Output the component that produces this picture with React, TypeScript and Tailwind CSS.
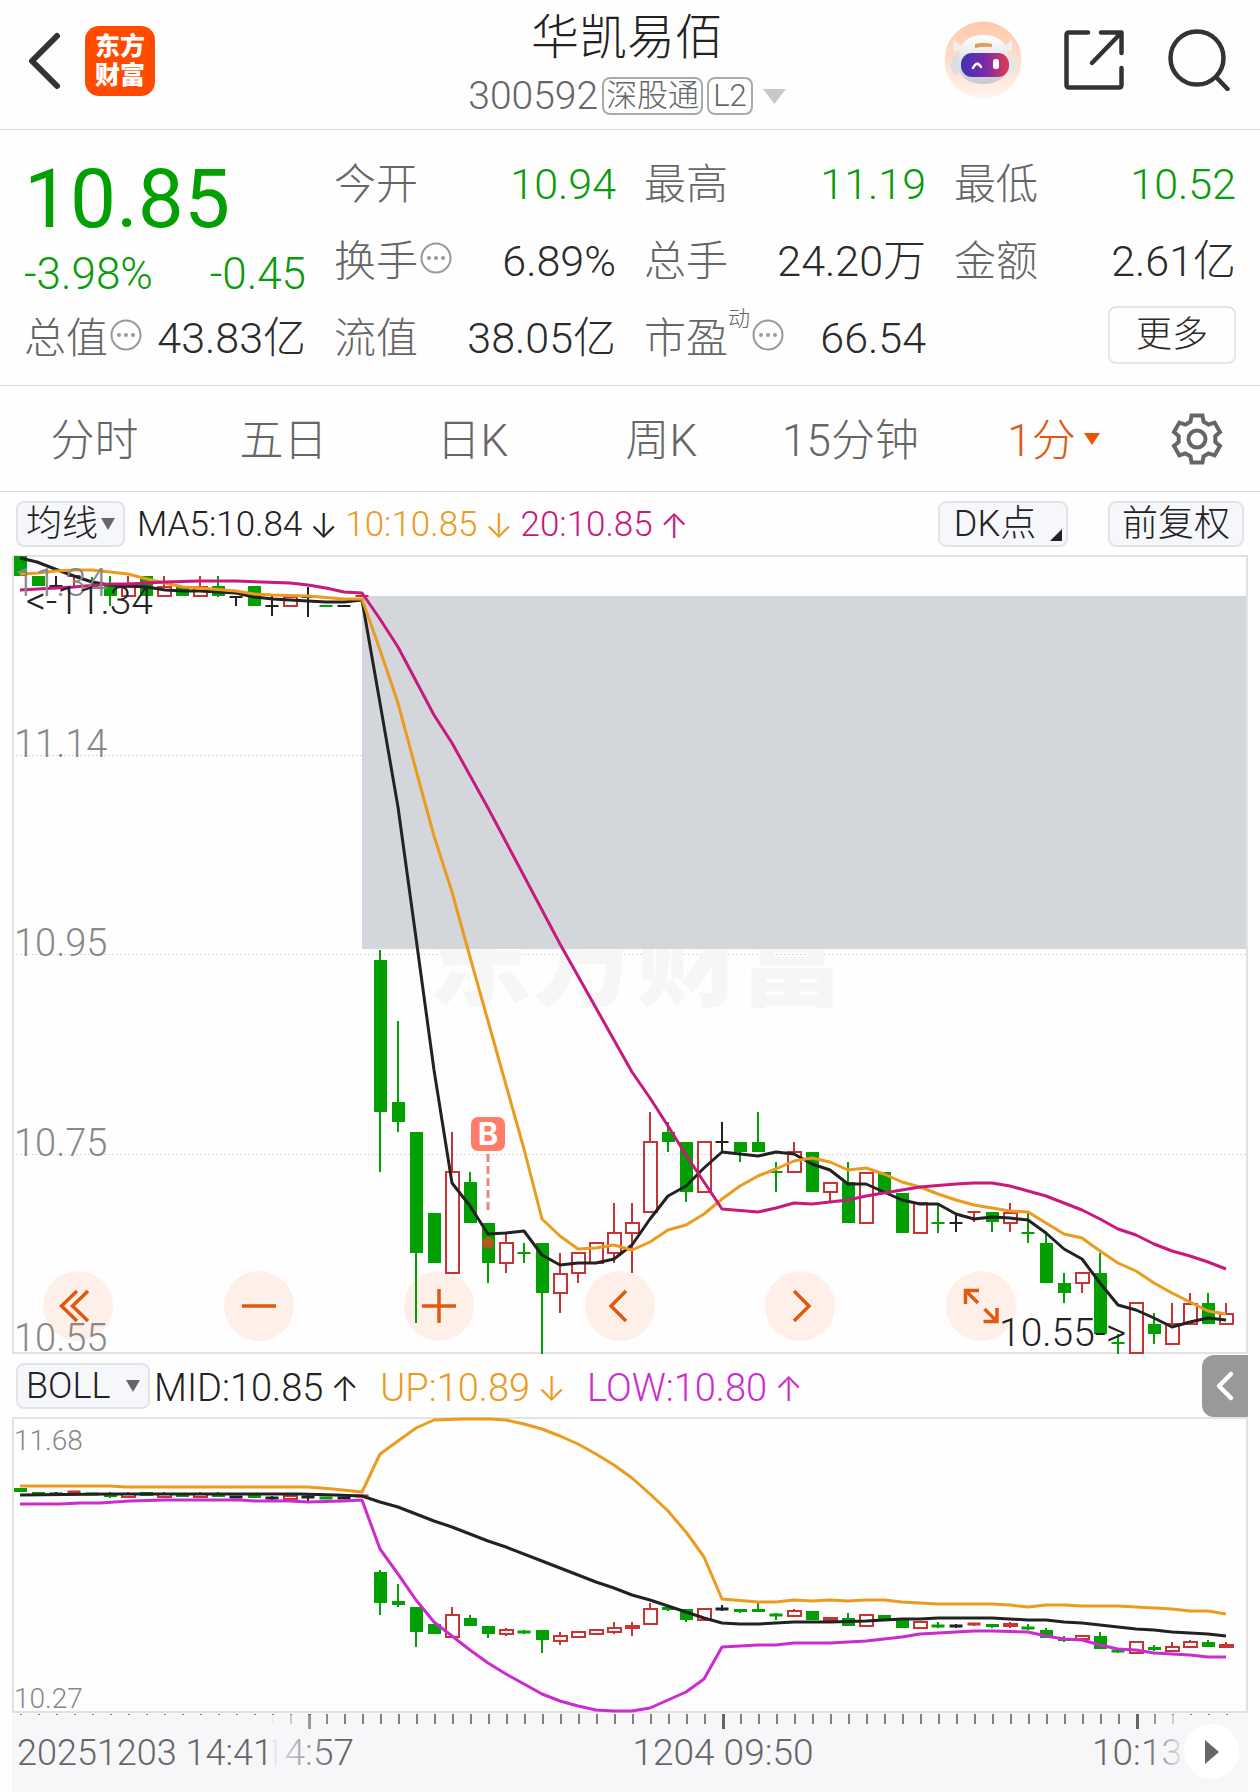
import React, { useState } from "react";

type Kind = "g" | "r" | "k";
// kind, body top, body bottom, wick top, wick bottom
type Candle = [Kind, number, number, number, number];

const STEP = 18;
const X0 = 20;

const CANDLES: Candle[] = [
  ["g", 556, 576, 556, 576],
  ["g", 576, 586, 576, 586],
  ["k", 586, 586, 576, 586],
  ["r", 576, 576, 576, 586],
  ["g", 586, 586, 577, 588],
  ["g", 586, 596, 576, 606],
  ["r", 586, 597, 576, 597],
  ["g", 576, 596, 576, 596],
  ["r", 586, 597, 576, 597],
  ["g", 586, 596, 586, 596],
  ["r", 586, 597, 576, 597],
  ["g", 586, 596, 576, 597],
  ["k", 597, 597, 597, 606],
  ["g", 586, 606, 586, 606],
  ["k", 606, 606, 596, 616],
  ["r", 596, 607, 596, 607],
  ["k", 597, 597, 587, 617],
  ["g", 606, 606, 606, 606],
  ["k", 606, 606, 606, 606],
  ["r", 596, 596, 596, 596],
  ["g", 960, 1112, 950, 1172],
  ["g", 1102, 1122, 1021, 1132],
  ["g", 1132, 1253, 1132, 1323],
  ["g", 1213, 1263, 1213, 1263],
  ["r", 1171, 1274, 1132, 1274],
  ["g", 1182, 1223, 1172, 1223],
  ["g", 1223, 1263, 1223, 1283],
  ["r", 1242, 1264, 1233, 1273],
  ["g", 1253, 1253, 1243, 1263],
  ["g", 1243, 1293, 1243, 1354],
  ["r", 1273, 1294, 1253, 1313],
  ["r", 1252, 1274, 1252, 1283],
  ["r", 1242, 1264, 1242, 1264],
  ["r", 1232, 1254, 1203, 1263],
  ["r", 1222, 1234, 1203, 1273],
  ["r", 1141, 1213, 1112, 1213],
  ["g", 1132, 1142, 1122, 1152],
  ["g", 1142, 1192, 1142, 1202],
  ["r", 1141, 1193, 1141, 1193],
  ["k", 1142, 1142, 1122, 1152],
  ["g", 1142, 1152, 1142, 1162],
  ["g", 1142, 1152, 1112, 1152],
  ["g", 1172, 1172, 1162, 1192],
  ["r", 1151, 1173, 1142, 1173],
  ["g", 1152, 1192, 1152, 1192],
  ["r", 1182, 1193, 1182, 1202],
  ["g", 1182, 1223, 1162, 1223],
  ["r", 1172, 1224, 1172, 1224],
  ["g", 1172, 1193, 1172, 1193],
  ["g", 1193, 1233, 1193, 1233],
  ["r", 1202, 1234, 1202, 1234],
  ["g", 1223, 1223, 1203, 1233],
  ["k", 1223, 1223, 1214, 1232],
  ["r", 1212, 1212, 1212, 1222],
  ["g", 1212, 1222, 1212, 1232],
  ["r", 1212, 1224, 1203, 1232],
  ["g", 1233, 1233, 1213, 1243],
  ["g", 1243, 1283, 1233, 1283],
  ["g", 1283, 1293, 1273, 1303],
  ["r", 1272, 1284, 1272, 1293],
  ["g", 1273, 1334, 1253, 1334],
  ["g", 1343, 1343, 1334, 1354],
  ["r", 1302, 1354, 1302, 1354],
  ["g", 1324, 1334, 1313, 1344],
  ["r", 1323, 1345, 1303, 1345],
  ["r", 1303, 1325, 1293, 1325],
  ["g", 1303, 1324, 1293, 1324],
  ["r", 1313, 1325, 1303, 1325],
];

const MA5 =
  "20,558 37,562 55,569 74,576 92,582 110,585 129,586 147,587 165,590 183,591 200,591 236,593 254,597 273,599 290,600 308,601 326,602 344,602 362,600 380,703 398,807 416,938 434,1070 452,1183 470,1206 488,1234 506,1233 524,1231 542,1255 560,1265 578,1263 596,1263 614,1259 632,1245 650,1219 668,1196 686,1186 704,1168 722,1152 740,1154 758,1156 776,1152 794,1154 812,1164 830,1170 848,1184 866,1184 884,1192 902,1200 920,1204 938,1204 956,1214 974,1219 992,1217 1010,1218 1028,1220 1046,1233 1064,1249 1082,1259 1100,1283 1118,1305 1136,1310 1154,1318 1172,1327 1190,1322 1208,1318 1226,1320";
const MA10 =
  "20,574 38,573 56,571 74,570 92,570 110,572 128,574 147,579 165,583 183,587 200,588 236,591 254,594 272,595 308,596 344,599 362,599 380,650 398,703 416,770 434,836 452,892 470,957 488,1021 506,1085 524,1149 542,1219 560,1236 578,1249 596,1248 614,1245 632,1250 650,1242 668,1230 686,1225 704,1214 722,1199 740,1186 758,1176 776,1169 794,1161 812,1158 830,1162 848,1170 866,1168 884,1174 902,1182 920,1187 938,1194 956,1200 974,1205 992,1208 1010,1211 1028,1212 1046,1223 1064,1234 1082,1238 1100,1251 1118,1263 1136,1271 1154,1283 1172,1293 1190,1302 1208,1311 1226,1314";
const MA20 =
  "20,590 74,587 110,584 128,584 165,582 200,581 236,581 290,583 308,585 326,588 344,592 362,593 380,619 398,647 416,681 434,715 452,743 488,808 524,876 560,944 632,1072 650,1098 668,1126 686,1155 722,1209 758,1212 776,1208 794,1203 812,1204 830,1202 848,1200 866,1196 884,1193 902,1190 920,1187 956,1184 974,1183 992,1183 1010,1186 1028,1191 1046,1196 1064,1203 1082,1210 1100,1219 1118,1229 1136,1235 1154,1244 1172,1251 1190,1256 1208,1262 1226,1269";
const BOLL_UP =
  "20,1486 110,1486 125,1487 308,1487 333,1489 362,1492 380,1454 398,1441 416,1428 434,1420 463,1419 490,1419 506,1420 524,1424 542,1429 560,1436 578,1444 596,1454 614,1465 632,1478 650,1494 668,1511 686,1532 704,1557 722,1599 758,1602 776,1602 794,1600 812,1601 830,1600 848,1601 866,1600 884,1600 902,1602 938,1604 992,1604 1010,1605 1028,1607 1046,1605 1064,1605 1082,1606 1118,1606 1172,1609 1190,1611 1208,1611 1226,1614";
const BOLL_MID =
  "20,1495 110,1494 300,1494 335,1495 362,1496 380,1502 398,1507 434,1521 452,1527 488,1541 506,1547 542,1561 596,1582 614,1588 632,1595 650,1600 668,1606 686,1612 704,1618 722,1623 740,1624 758,1624 794,1622 830,1622 866,1621 902,1619 920,1619 938,1618 992,1618 1028,1620 1046,1620 1064,1622 1082,1623 1136,1629 1154,1630 1172,1632 1208,1634 1226,1636";
const BOLL_LOW =
  "20,1504 60,1504 80,1503 100,1503 130,1501 165,1500 240,1500 254,1501 290,1501 308,1502 344,1501 362,1500 380,1549 398,1574 416,1600 434,1622 452,1636 470,1650 488,1663 506,1674 524,1684 542,1694 560,1701 578,1706 596,1710 614,1711 632,1711 650,1708 668,1700 686,1692 704,1679 722,1647 758,1645 776,1645 794,1643 830,1643 866,1641 902,1637 920,1634 974,1631 992,1631 1028,1632 1046,1636 1064,1639 1082,1640 1100,1645 1118,1649 1136,1650 1154,1653 1190,1655 1208,1657 1226,1657";

const COLORS: Record<Kind, string> = { g: "#02a002", r: "#c83434", k: "#222222" };

function Candles({ map, thin = 2 }: { map: (y: number) => number; thin?: number }) {
  return (
    <g>
      {CANDLES.map(([kind, top, bottom, high, low], i) => {
        const x = X0 + i * STEP;
        const c = COLORS[kind];
        const t = map(top);
        const b = map(bottom);
        if (bottom - top < 2) {
          return (
            <g key={i} stroke={c}>
              <path d={`M${x - 6.5} ${t}H${x + 6.5}`} strokeWidth={thin} />
              <path d={`M${x} ${map(high)}V${map(low)}`} strokeWidth={2} />
            </g>
          );
        }
        if (kind === "r") {
          return (
            <g key={i} stroke={c} strokeWidth={2} fill="none">
              <path d={`M${x} ${map(high)}V${t}M${x} ${b}V${map(low)}`} />
              <rect x={x - 6} y={t + (thin > 2 ? 0 : 1)} width={13} height={Math.max(b - t - (thin > 2 ? 0 : 2), 2)} />
            </g>
          );
        }
        return (
          <g key={i}>
            <path d={`M${x} ${map(high)}V${map(low)}`} stroke={c} strokeWidth={2} />
            <rect x={x - 6} y={t} width={13} height={Math.max(b - t, thin)} fill={c} />
          </g>
        );
      })}
    </g>
  );
}

function Line({ points, color }: { points: string; color: string }) {
  return <polyline points={points} fill="none" stroke={color} strokeWidth={3} strokeLinejoin="round" />;
}

function Dots() {
  return (
    <svg viewBox="0 0 32 32" className="mb-2 ml-0.5 size-8 shrink-0" aria-hidden="true">
      <circle cx="16" cy="16" r="14.5" fill="none" stroke="#999" strokeWidth="2" />
      <circle cx="9" cy="16" r="2" fill="#999" />
      <circle cx="16" cy="16" r="2" fill="#999" />
      <circle cx="23" cy="16" r="2" fill="#999" />
    </svg>
  );
}

function Down({ className }: { className: string }) {
  return (
    <svg viewBox="0 0 10 8" preserveAspectRatio="none" className={className} aria-hidden="true">
      <path d="M0 0H10L5 8Z" fill="currentColor" />
    </svg>
  );
}

function Stat({
  label,
  value,
  green,
  dots,
  sup,
}: {
  label: string;
  value: string;
  green?: boolean;
  dots?: boolean;
  sup?: string;
}) {
  return (
    <div className="flex h-[77px] items-center justify-between whitespace-nowrap">
      <dt className="flex items-center text-[#666]">
        {label}
        {sup && <sup className="-top-5 text-[22px] leading-none">{sup}</sup>}
        {dots && <Dots />}
      </dt>
      <dd className={`text-[43px] ${green ? "text-[#0a9b0a]" : "text-[#2b2b2b]"}`}>{value}</dd>
    </div>
  );
}

const gearPath = (() => {
  const pts: string[] = [];
  for (let k = 0; k < 6; k++) {
    const base = 30 + k * 60;
    for (const [r, d] of [
      [18.5, -21],
      [24, -13],
      [24, 13],
      [18.5, 21],
    ]) {
      const a = ((base + d) * Math.PI) / 180;
      pts.push(`${(28 + r * Math.cos(a)).toFixed(1)} ${(28 + r * Math.sin(a)).toFixed(1)}`);
    }
  }
  return `M${pts.join("L")}Z`;
})();

function Header() {
  return (
    <header className="flex h-[130px] items-start justify-between border-b border-[#d6d6d6] pr-[30px] pl-6">
      <div className="flex w-[330px] items-center pt-[26px]">
        <button aria-label="返回" className="mr-[21px]">
          <svg viewBox="0 0 40 60" className="h-[60px] w-10" fill="none" stroke="#333" strokeWidth="6" strokeLinecap="round" strokeLinejoin="round">
            <path d="M33 5L8 30L33 55" />
          </svg>
        </button>
        <div className="flex size-[70px] flex-col items-center justify-center rounded-[14px] bg-[#ff4a00] text-[25px] leading-[29px] font-black text-white">
          <span>东方</span>
          <span>财富</span>
        </div>
      </div>
      <div className="flex flex-col items-center">
        <h1 className="mt-2 text-[48px] leading-[60px] text-[#222]">华凯易佰</h1>
        <button className="mt-2 flex items-center text-[39px] leading-[40px] text-[#666]">
          <span className="mr-1">300592</span>
          <span className="mr-1 flex h-[38px] items-center rounded-lg border-2 border-[#aaa] px-0.5 text-[31px]">深股通</span>
          <span className="mr-2.5 flex h-[38px] items-center rounded-lg border-2 border-[#aaa] px-1 text-[31px]">L2</span>
          <Down className="h-[15px] w-[23px] text-[#c8c8c8]" />
        </button>
      </div>
      <div className="flex w-[330px] items-center justify-end pt-[21px]">
        <button aria-label="助手" className="mr-[41px]">
          <svg viewBox="0 0 78 78" className="size-[78px]">
            <defs>
              <linearGradient id="halo" x1="0" y1="0" x2="0" y2="1">
                <stop offset="0" stopColor="#fdc8ab" />
                <stop offset="1" stopColor="#fff4ee" />
              </linearGradient>
              <linearGradient id="visor" x1="0" y1="0" x2="1" y2="0">
                <stop offset="0" stopColor="#3a35b8" />
                <stop offset="0.5" stopColor="#7a2aa8" />
                <stop offset="1" stopColor="#dd3c55" />
              </linearGradient>
              <linearGradient id="shell" x1="0" y1="0" x2="0" y2="1">
                <stop offset="0" stopColor="#ffffff" />
                <stop offset="1" stopColor="#c9c9d2" />
              </linearGradient>
            </defs>
            <circle cx="39" cy="39" r="38.5" fill="url(#halo)" />
            <path d="M11 18Q7 24 11 31L18 28L17 24Q12 23 11 18ZM67 18Q70 24 67 31L60 28L61 24Q66 23 67 18Z" fill="#f1efef" />
            <ellipse cx="12" cy="44" rx="5" ry="10" fill="#dcdce2" />
            <ellipse cx="67" cy="44" rx="5" ry="10" fill="#e6e6ea" />
            <path d="M15 38Q15 14 39 14Q64 14 64 38Q67 62 39 63Q11 62 15 38Z" fill="url(#shell)" />
            <path d="M31 23Q40 21 48 23V26Q40 25 31 27Z" fill="#e39a5b" />
            <rect x="17" y="32" width="48" height="24" rx="11" fill="url(#visor)" />
            <path d="M29 47Q33 39 37 46" fill="none" stroke="#fff" strokeWidth="2.5" strokeLinecap="round" />
            <rect x="49" y="38" width="6" height="10" rx="2.5" fill="#fff" />
          </svg>
        </button>
        <button aria-label="分享" className="mr-[43px]">
          <svg viewBox="0 0 62 62" className="size-[62px]" fill="none" stroke="#333" strokeWidth="4.5" strokeLinecap="round" strokeLinejoin="round">
            <path d="M25 3.500H6Q3.500 3.500 3.500 6V56Q3.500 58.500 6 58.500H56Q58.500 58.500 58.500 56V39M38 3.500H58.500V24M58 4L29 34" />
          </svg>
        </button>
        <button aria-label="搜索">
          <svg viewBox="0 0 62 62" className="size-[62px]" fill="none" stroke="#333" strokeWidth="4.500" strokeLinecap="round">
            <circle cx="29" cy="29" r="26.500" />
            <path d="M48 48L59.500 60" />
          </svg>
        </button>
      </div>
    </header>
  );
}

function Quote() {
  return (
    <dl className="grid grid-cols-4 gap-x-7 border-b border-[#d6d6d6] pt-4 pr-6 pb-2 pl-6 text-[42px] leading-none">
      <div>
        <div className="flex h-[102px] items-center pt-1 text-[82px] font-normal text-[#02a002]">10.85</div>
        <div className="flex h-[52px] items-center justify-between text-[44px] text-[#0a9b0a]">
          <span>-3.98%</span>
          <span>-0.45</span>
        </div>
        <Stat label="总值" value="43.83亿" dots />
      </div>
      <div>
        <Stat label="今开" value="10.94" green />
        <Stat label="换手" value="6.89%" dots />
        <Stat label="流值" value="38.05亿" />
      </div>
      <div>
        <Stat label="最高" value="11.19" green />
        <Stat label="总手" value="24.20万" />
        <Stat label="市盈" value="66.54" sup="动" dots />
      </div>
      <div>
        <Stat label="最低" value="10.52" green />
        <Stat label="金额" value="2.61亿" />
        <div className="flex h-[77px] items-center justify-end">
          <button className="mb-2 h-[58px] w-[128px] rounded-lg border-2 border-[#e6e6e6] text-[36px] text-[#2b2b2b]">更多</button>
        </div>
      </div>
    </dl>
  );
}

const TABS = ["分时", "五日", "日K", "周K", "15分钟", "1分"];

function Tabs() {
  const [active, setActive] = useState("1分");
  return (
    <nav className="flex h-[106px] items-center border-b border-[#d6d6d6] text-[44px]">
      <div className="grid flex-1 grid-cols-6 pt-1">
        {TABS.map((t) => (
          <button
            key={t}
            onClick={() => setActive(t)}
            className={`flex items-center justify-center whitespace-nowrap ${t === "1分" ? "pl-7" : ""} ${
              t === active ? "text-[#dd5a10]" : "text-[#666]"
            }`}
          >
            {t}
            {t === "1分" && <Down className="mb-1 ml-2 h-3 w-4 text-[#ea5504]" />}
          </button>
        ))}
      </div>
      <div className="flex w-[126px] justify-center">
        <button aria-label="设置">
          <svg viewBox="0 0 56 56" className="size-14" fill="none" stroke="#666" strokeWidth="4">
            <path d={gearPath} />
            <circle cx="28" cy="28" r="8.500" />
          </svg>
        </button>
      </div>
    </nav>
  );
}

function Picker({ label, options, className }: { label: string; options: string[]; className: string }) {
  return (
    <div className={`relative flex h-[46px] shrink-0 items-center rounded-lg border-2 border-[#e2e4e9] bg-[#f6f7fa] ${className}`}>
      <select
        aria-label={label}
        className="h-full w-full appearance-none bg-transparent pl-2 text-[36px] leading-[42px] text-[#222] outline-none"
      >
        {options.map((o) => (
          <option key={o}>{o}</option>
        ))}
      </select>
      <Down className="pointer-events-none absolute right-2 h-3 w-3.5 text-[#666]" />
    </div>
  );
}

function Reading({ text, arrow, className }: { text: string; arrow: string; className: string }) {
  return (
    <span className={`flex items-center pt-1 whitespace-nowrap ${className}`}>
      {text}
      <span className="w-[43px] text-center font-[Inter] text-[34px]">{arrow}</span>
    </span>
  );
}

function PriceChart() {
  const round = "flex size-[70px] items-center justify-center rounded-full bg-[#fef0e8]";
  const icon = "size-[50px] fill-none stroke-[#dd5a10] stroke-[3.5]";
  return (
    <div className="relative">
      <div className="absolute inset-x-0 bottom-3.5 flex justify-between pr-[232px] pl-[31px]">
        <button aria-label="最左" className={round}>
          <svg viewBox="0 0 50 50" className={icon}>
            <path d="M24 10L8.500 25L24 40M35 10L19.500 25L35 40" />
          </svg>
        </button>
        <button aria-label="缩小" className={round}>
          <svg viewBox="0 0 50 50" className={icon}>
            <path d="M8 25H42" />
          </svg>
        </button>
        <button aria-label="放大" className={round}>
          <svg viewBox="0 0 50 50" className={icon}>
            <path d="M8 25H42M25 8V42" />
          </svg>
        </button>
        <button aria-label="左移" className={round}>
          <svg viewBox="0 0 50 50" className={icon}>
            <path d="M31 10L16 25L31 40" />
          </svg>
        </button>
        <button aria-label="右移" className={round}>
          <svg viewBox="0 0 50 50" className={icon}>
            <path d="M19 10L34 25L19 40" />
          </svg>
        </button>
        <button aria-label="全屏" className={round}>
          <svg viewBox="0 0 50 50" className={icon}>
            <path d="M23 9.500H9.500V23M10 10L22 22M41 27V40.500H27.500M40.500 40L28.500 28" />
          </svg>
        </button>
      </div>
      <svg viewBox="12 555 1236 800" className="pointer-events-none relative block h-auto w-full" role="img" aria-label="1分K线图">
        <g stroke="#d8d8d8" strokeDasharray="2 2">
          <path d="M12 755.500H1247M12 954.500H1247M12 1154.500H1247" />
        </g>
        <text x="428" y="998" fontSize="104" fontWeight="900" fill="#f6f6f7">
          东方财富
        </text>
        <rect x="362" y="596" width="885" height="353" fill="#d3d7dc" />
        <rect x="13" y="556" width="1234" height="797" fill="none" stroke="#e2e2e2" strokeWidth="2" />
        <Candles map={(y) => y} />
        <circle cx="488" cy="1243" r="6" fill="#b05a1e" />
        <Line points={MA5} color="#222222" />
        <Line points={MA10} color="#eb9b1e" />
        <Line points={MA20} color="#c8197f" />
        <path d="M488 1154V1212" stroke="#e48a7a" strokeWidth="3" strokeDasharray="8 4" />
        <rect x="471" y="1117" width="34" height="34" rx="7" fill="#ff7c68" />
        <text x="488" y="1145" fontSize="31" fontWeight="700" fill="#fff" textAnchor="middle" fontFamily="Inter">
          B
        </text>
        <g fontSize="38" fill="#888">
          <text x="14" y="596">11.34</text>
          <text x="14" y="757">11.14</text>
          <text x="14" y="956">10.95</text>
          <text x="14" y="1156">10.75</text>
          <text x="14" y="1351">10.55</text>
        </g>
        <g fontSize="39" fill="#222">
          <text x="26" y="614">&lt;-11.34</text>
          <text x="999" y="1346">10.55-&gt;</text>
        </g>
      </svg>
    </div>
  );
}

function BollChart() {
  return (
    <svg viewBox="12 1417 1236 296" className="block h-auto w-full" role="img" aria-label="BOLL指标图">
      <rect x="13" y="1418" width="1234" height="294" fill="none" stroke="#e2e2e2" strokeWidth="2" />
      <Candles map={(y) => Math.round(y * 0.2066 + 1373.3)} thin={3} />
      <Line points={BOLL_UP} color="#eb9b1e" />
      <Line points={BOLL_MID} color="#222222" />
      <Line points={BOLL_LOW} color="#cc2bd0" />
      <g fontSize="28" fill="#888">
        <text x="14" y="1450">11.68</text>
        <text x="14" y="1708">10.27</text>
      </g>
    </svg>
  );
}

function TimeAxis() {
  return (
    <div className="relative bg-[#f7f7fa]">
      <svg viewBox="12 1713 1236 79" className="block h-auto w-full" role="img" aria-label="时间轴">
        <defs>
          <linearGradient id="fadeL" x1="0" x2="1">
            <stop offset="0.8" stopColor="#f7f7fa" />
            <stop offset="1" stopColor="#f7f7fa" stopOpacity="0" />
          </linearGradient>
          <linearGradient id="fadeR" x1="1" x2="0">
            <stop offset="0.6" stopColor="#f7f7fa" />
            <stop offset="1" stopColor="#f7f7fa" stopOpacity="0" />
          </linearGradient>
        </defs>
        {CANDLES.map((_, i) => {
          const major = i === 16 || i === 39 || i === 62;
          return (
            <rect key={i} x={X0 + i * STEP} y={1714} width={major ? 3 : 2} height={major ? 15 : 10} fill={major ? "#666" : "#808080"} />
          );
        })}
        <g fontSize="37" fill="#666">
          <text x="309" y="1765" textAnchor="middle">14:57</text>
          <text x="723" y="1765" textAnchor="middle">1204 09:50</text>
          <text x="1137" y="1765" textAnchor="middle">10:13</text>
        </g>
        <rect x="12" y="1715" width="320" height="77" fill="url(#fadeL)" />
        <rect x="1146" y="1715" width="102" height="77" fill="url(#fadeR)" />
        <text x="17" y="1765" fontSize="36" fill="#666">
          20251203 14:41
        </text>
      </svg>
      <button aria-label="播放" className="absolute top-[11px] right-[9px] flex size-[55px] items-center justify-center rounded-full bg-white">
        <svg viewBox="0 0 14 24" className="h-6 w-3.5">
          <path d="M0 0L14 12L0 24Z" fill="#666" />
        </svg>
      </button>
    </div>
  );
}

export default function App() {
  return (
    <main className="min-h-screen bg-[#fefefe] font-[Roboto,'Noto_Sans_CJK_SC',sans-serif] font-light">
      <Header />
      <Quote />
      <Tabs />
      <div className="flex h-[63px] items-center pr-4 pl-4 text-[35px]">
        <Picker label="主图指标" options={["均线", "BOLL"]} className="mr-3 w-[109px]" />
        <Reading text="MA5:10.84" arrow="↓" className="text-[#222]" />
        <Reading text="10:10.85" arrow="↓" className="text-[#eb9b1e]" />
        <Reading text="20:10.85" arrow="↑" className="text-[#c8197f]" />
        <button className="relative mr-10 ml-auto h-[46px] w-[130px] rounded-lg border-2 border-[#e2e4e9] bg-[#f6f7fa] pr-4 text-[36px] leading-none text-[#222]">
          DK点
          <svg viewBox="0 0 12 12" className="absolute right-1 bottom-1 size-3" aria-hidden="true">
            <path d="M12 0V12H0Z" fill="#222" />
          </svg>
        </button>
        <button className="h-[46px] w-[136px] rounded-lg border-2 border-[#e2e4e9] bg-[#f6f7fa] text-[36px] leading-none text-[#222]">前复权</button>
      </div>
      <div className="px-3">
        <PriceChart />
        <div className="flex h-[62px] items-center pl-1 text-[38px]">
          <Picker label="副图指标" options={["BOLL", "MACD"]} className="mr-1 w-[134px]" />
          <Reading text="MID:10.85" arrow="↑" className="mr-3.5 text-[#222]" />
          <Reading text="UP:10.89" arrow="↓" className="mr-3.5 text-[#eb9b1e]" />
          <Reading text="LOW:10.80" arrow="↑" className="text-[#cc2bd0]" />
          <button aria-label="展开" className="ml-auto flex h-[62px] w-[46px] items-center justify-center rounded-l-xl bg-[#999]">
            <svg viewBox="0 0 20 32" className="h-8 w-5" fill="none" stroke="#fff" strokeWidth="4.500" strokeLinecap="round" strokeLinejoin="round">
              <path d="M16 4L4 16L16 28" />
            </svg>
          </button>
        </div>
        <BollChart />
        <TimeAxis />
      </div>
    </main>
  );
}
